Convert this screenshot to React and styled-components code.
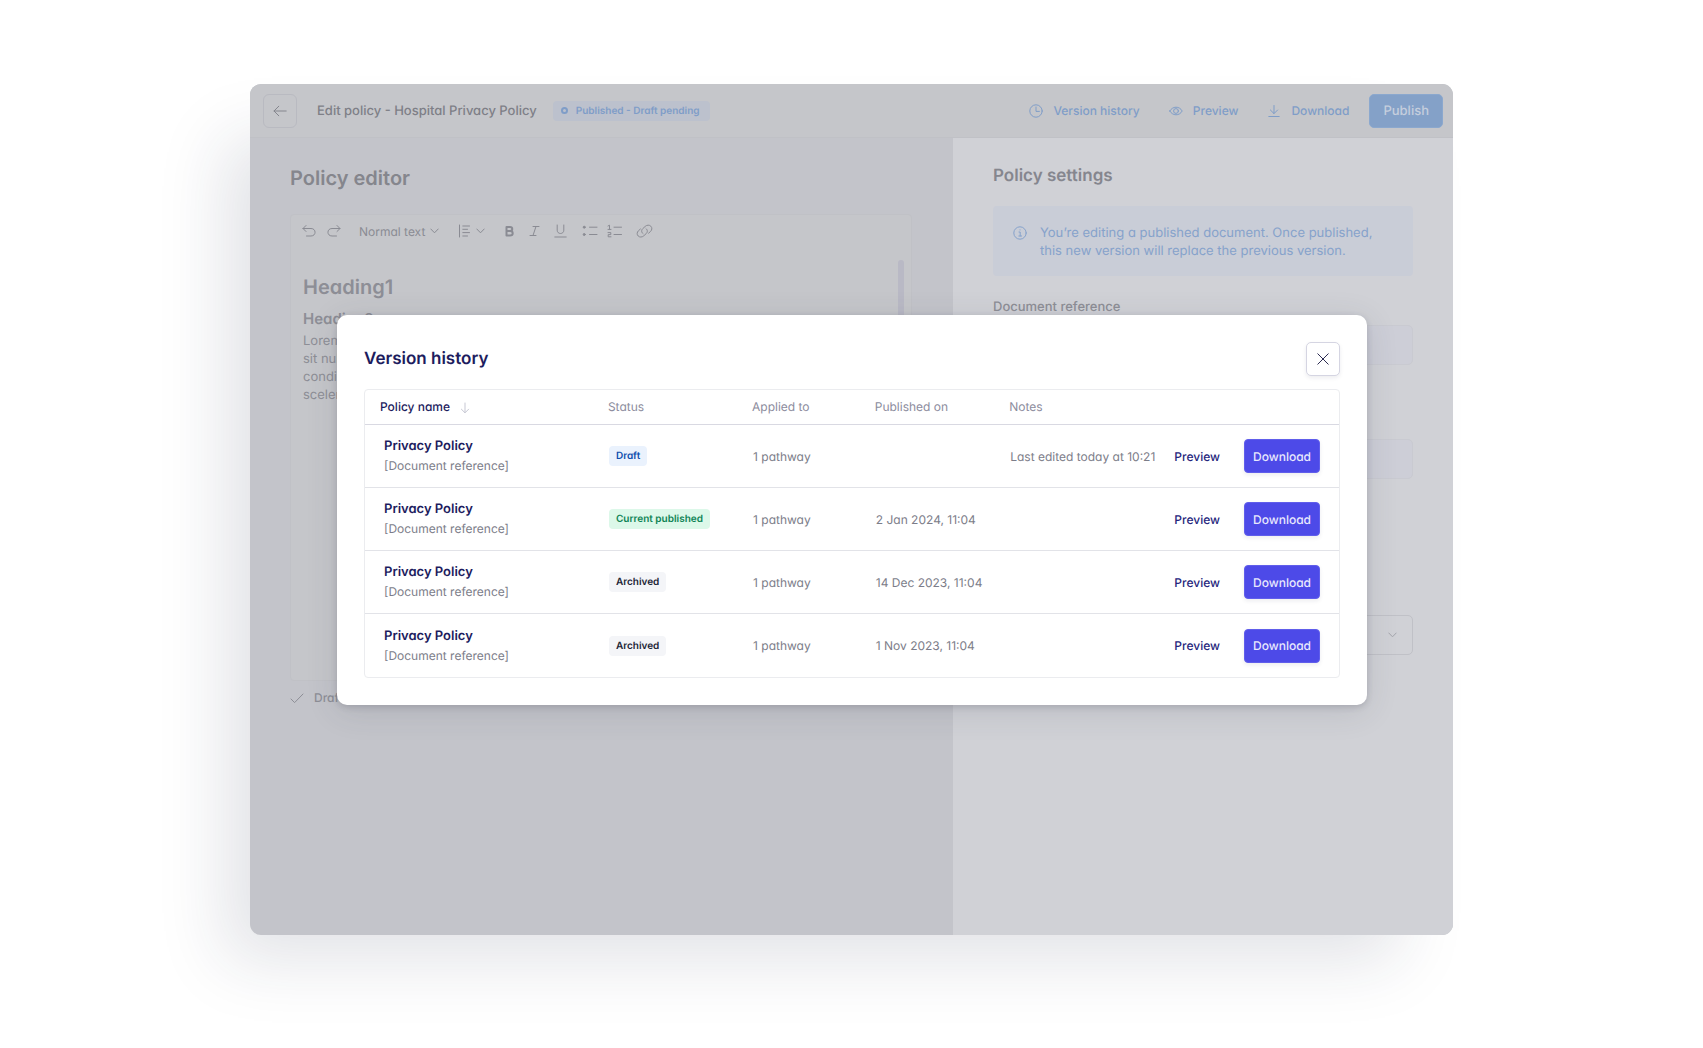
import React from "react";
import styled, { createGlobalStyle } from "styled-components";

const GlobalStyle = createGlobalStyle`
   * {
      box-sizing: border-box;
   }
   body {
      margin: 0;
      background: #fff;
   }
   body,
   button,
   input,
   select {
      font-family: Inter, "Liberation Sans", sans-serif;
      font-feature-settings: "cv11";
      text-rendering: geometricPrecision;
   }
   h1,
   h2,
   h3,
   p {
      margin: 0;
   }
   button {
      cursor: pointer;
   }
`;

const Page = styled.div`
   display: flex;
   min-height: 100vh;
   padding: 84px 250px 113px;
`;

const Frame = styled.div`
   position: relative;
   display: flex;
   flex: 1;
   flex-direction: column;
   border-radius: 11px;
   background: #c3c4ca;
   box-shadow: -40px 40px 64px -15px rgba(30, 42, 66, 0.13);
`;

const TopBar = styled.header`
   display: flex;
   align-items: center;
   height: 54px;
   padding: 0 10px 0 13px;
   border-bottom: 1px solid #c0c1c6;
   border-radius: 11px 11px 0 0;
   background: #c5c6ca;
`;

const BackButton = styled.button`
   display: flex;
   align-items: center;
   justify-content: center;
   width: 34px;
   height: 34px;
   padding: 0;
   border: 1px solid #b9bac1;
   border-radius: 6px;
   background: transparent;
   color: #85868e;
`;

const DocTitle = styled.h1`
   margin-left: 20px;
   color: #7e7f87;
   font-size: 13px;
   font-weight: 500;
   line-height: 20px;
`;

const PendingBadge = styled.span`
   display: flex;
   align-items: center;
   gap: 8px;
   height: 20px;
   margin-left: 16px;
   padding: 0 10px 0 8px;
   border-radius: 4px;
   background: #bcc1cd;
   color: #7f9dc8;
   font-size: 10px;
   font-weight: 600;
`;

const Ring = styled.span`
   width: 7px;
   height: 7px;
   border: 2px solid #7f9dc8;
   border-radius: 50%;
`;

const TopActions = styled.div`
   display: flex;
   align-items: center;
   gap: 29px;
   margin-left: auto;
`;

const LinkButton = styled.button`
   display: flex;
   align-items: center;
   gap: 10px;
   padding: 0;
   border: none;
   background: transparent;
   color: #7f9dc8;
   font-size: 12px;
   font-weight: 500;
`;

const PublishButton = styled.button`
   height: 34px;
   margin-left: -9px;
   padding: 0 13px;
   border: 1px solid #8ba8ce;
   border-radius: 5px;
   background: #84a1c8;
   color: #c5cedd;
   font-size: 13px;
   font-weight: 500;
`;

const Body = styled.div`
   display: flex;
   flex: 1;
`;

const Editor = styled.main`
   flex: 1;
   padding: 26px 41px 26px 40px;
`;

const EditorTitle = styled.h2`
   color: #85868d;
   font-size: 20px;
   font-weight: 600;
   line-height: 28px;
`;

const EditorCard = styled.div`
   height: 467px;
   margin-top: 22px;
   border: 1px solid #c0c1c6;
   border-radius: 4px;
   background: #c5c6ca;
`;

const Toolbar = styled.div`
   display: flex;
   align-items: center;
   height: 32px;
   padding: 0 11px;
`;

const Tool = styled.button`
   display: flex;
   align-items: center;
   gap: 5px;
   margin-right: ${(props) => props.$gap || 9}px;
   padding: 0;
   border: none;
   background: transparent;
   color: #8a8b93;
   font-size: 12px;
   font-weight: 400;
`;

const Content = styled.div`
   display: flex;
   justify-content: space-between;
   padding: 13px 7px 0 12px;
   color: #8d8e96;
`;

const DocText = styled.div`
   white-space: nowrap;

   h2 {
      padding-top: 13px;
      font-size: 20px;
      font-weight: 600;
      line-height: 28px;
   }
   h3 {
      padding: 9px 0 4px;
      font-size: 15px;
      font-weight: 600;
      line-height: 18px;
   }
   p {
      font-size: 13px;
      line-height: 18px;
   }
`;

const ScrollThumb = styled.div`
   width: 6px;
   height: 140px;
   border-radius: 3px;
   background: #b9b9c5;
`;

const SavedNote = styled.p`
   display: flex;
   align-items: center;
   gap: 10px;
   margin-top: 9px;
   color: #8d8e96;
   font-size: 12px;
   font-weight: 500;
`;

const Settings = styled.aside`
   width: 500px;
   padding: 26px 40px;
   border-radius: 0 0 11px 0;
   background: #d0d1d6;
`;

const SettingsTitle = styled.h2`
   color: #85868e;
   font-size: 17px;
   font-weight: 600;
   line-height: 24px;
`;

const InfoBox = styled.div`
   display: flex;
   gap: 13px;
   margin-top: 18px;
   padding: 18px 20px 16px;
   border-radius: 4px;
   background: #c9cdd7;
   color: #86a2cb;
   font-size: 13px;
   line-height: 18px;

   svg {
      margin-top: 2px;
      flex: none;
   }
`;

const FieldLabel = styled.label`
   display: block;
   margin: 21px 0 8px;
   color: #8d8e96;
   font-size: 13px;
   font-weight: 500;
   line-height: 20px;
`;

const Field = styled.input`
   display: block;
   width: 100%;
   height: 40px;
   margin-bottom: 74px;
   border: 1px solid #c9cad1;
   border-radius: 5px;
   background: #cdced7;
`;

const SelectWrap = styled.div`
   display: flex;
   align-items: center;
   justify-content: flex-end;
   height: 40px;
   margin-top: 136px;
   padding-right: 15px;
   border: 1px solid #c0c1c7;
   border-radius: 5px;
   color: #a4a5ac;

   select {
      flex: 1;
      height: 100%;
      border: none;
      background: transparent;
      appearance: none;
   }
`;

const Overlay = styled.div`
   position: absolute;
   inset: 0;
   display: flex;
   align-items: center;
   padding: 0 86px 0 87px;
   border-radius: 11px;
`;

const Modal = styled.section`
   flex: 1;
   padding: 27px;
   border-radius: 10px;
   background: #fff;
   box-shadow: 0 2px 6px rgba(60, 62, 75, 0.2), 0 6px 32px rgba(60, 62, 75, 0.14);
`;

const ModalHead = styled.div`
   display: flex;
   align-items: center;
   justify-content: space-between;
   margin-bottom: 13px;
`;

const ModalTitle = styled.h2`
   color: #1d1c5e;
   font-size: 17px;
   font-weight: 600;
`;

const CloseButton = styled.button`
   display: flex;
   align-items: center;
   justify-content: center;
   width: 34px;
   height: 34px;
   padding: 0;
   border: 1px solid #d5d5e2;
   border-radius: 5px;
   background: #fff;
   box-shadow: 0 2px 4px rgba(30, 30, 60, 0.08);
   color: #2b2b50;
`;

const TableBox = styled.div`
   border: 1px solid #ebecef;
   border-radius: 4px;
`;

const Table = styled.table`
   width: 100%;
   border-spacing: 0;
   table-layout: fixed;
   color: #7c7d89;
   font-size: 12px;
   white-space: nowrap;
`;

const Th = styled.th`
   width: ${(props) => props.$width};
   height: 35px;
   padding: 0 15px;
   border-bottom: 1px solid #d9d9e2;
   color: ${(props) => (props.$sorted ? "#1d1c5e" : "#8c8c9d")};
   font-weight: ${(props) => (props.$sorted ? 500 : 400)};
   text-align: left;

   svg {
      margin-left: 10px;
      vertical-align: middle;
      color: #c6c7d3;
   }
`;

const Td = styled.td`
   height: 63px;
   padding: 1px ${(props) => props.$pad || 16}px 0;
   border-bottom: 1px solid #e2e3e8;

   tr:last-child & {
      border-bottom: none;
   }
`;

const PolicyName = styled.div`
   color: #1d1c5e;
   font-size: 13px;
   font-weight: 600;
   line-height: 20px;
`;

const PolicyRef = styled.div`
   line-height: 20px;
`;

const tones = {
   blue: "background: #eaf2fd; color: #0e4fae;",
   green: "background: #dcf8e9; color: #0f8455;",
   grey: "background: #f4f5f8; color: #1c2536;",
};

const Status = styled.span`
   display: inline-block;
   padding: 0 7px;
   border-radius: 4px;
   font-size: 10px;
   font-weight: 600;
   line-height: 20px;
   ${(props) => tones[props.$tone]}
`;

const RowActions = styled.div`
   display: flex;
   align-items: center;
   justify-content: flex-end;
   gap: 24px;
`;

const PreviewButton = styled.button`
   padding: 0;
   border: none;
   background: transparent;
   color: #25257c;
   font-size: 12px;
   font-weight: 500;
`;

const DownloadButton = styled.button`
   height: 34px;
   padding: 0 8px;
   border: 1px solid #605eeb;
   border-radius: 4px;
   background: #4d4ae8;
   box-shadow: 0 2px 4px rgba(30, 30, 60, 0.08);
   color: #e8e8fd;
   font-size: 12px;
   font-weight: 500;
`;

const Svg = ({ w = 14, h = 14, sw = 1, children }) => (
   <svg
      width={w}
      height={h}
      viewBox={`0 0 ${w} ${h}`}
      fill="none"
      stroke="currentColor"
      strokeWidth={sw}
      strokeLinecap="round"
      strokeLinejoin="round"
      aria-hidden="true"
   >
      {children}
   </svg>
);

const Chevron = () => (
   <Svg w={9} h={6}>
      <path d="M0.8 1 L4.5 4.8 L8.2 1" />
   </Svg>
);

const rows = [
   { status: "Draft", tone: "blue", published: "", notes: "Last edited today at 10:21" },
   { status: "Current published", tone: "green", published: "2 Jan 2024, 11:04", notes: "" },
   { status: "Archived", tone: "grey", published: "14 Dec 2023, 11:04", notes: "" },
   { status: "Archived", tone: "grey", published: "1 Nov 2023, 11:04", notes: "" },
];

const Header = () => (
   <TopBar>
      <BackButton aria-label="Back">
         <Svg>
            <path d="M13.2 7 H1 M5.8 2.2 L1 7 L5.8 11.8" />
         </Svg>
      </BackButton>
      <DocTitle>Edit policy - Hospital Privacy Policy</DocTitle>
      <PendingBadge>
         <Ring />
         Published - Draft pending
      </PendingBadge>
      <TopActions>
         <LinkButton>
            <Svg>
               <circle cx="7" cy="7" r="6.2" />
               <path d="M7 3 V7.4 H10.4" />
            </Svg>
            Version history
         </LinkButton>
         <LinkButton>
            <Svg>
               <path d="M0.8 7 C3.6 1.9 10.4 1.9 13.2 7 C10.4 12.1 3.6 12.1 0.8 7 Z" />
               <circle cx="7" cy="7" r="2.4" />
            </Svg>
            Preview
         </LinkButton>
         <LinkButton>
            <Svg>
               <path d="M7 1.5 V9.4 M3.4 6 L7 9.6 L10.6 6 M1.8 12.5 H12.2" />
            </Svg>
            Download
         </LinkButton>
         <PublishButton>Publish</PublishButton>
      </TopActions>
   </TopBar>
);

const EditorToolbar = () => (
   <Toolbar>
      <Tool aria-label="Undo" $gap={11}>
         <Svg>
            <path d="M4 1.5 L1 4.5 L4 7.5 M1 4.5 H9 C14.4 4.5 14.4 12 9 12 H4.5" />
         </Svg>
      </Tool>
      <Tool aria-label="Redo" $gap={18}>
         <Svg>
            <path d="M10 1.5 L13 4.5 L10 7.5 M13 4.5 H5 C-0.4 4.5 -0.4 12 5 12 H9.5" />
         </Svg>
      </Tool>
      <Tool $gap={19}>
         Normal text
         <Chevron />
      </Tool>
      <Tool aria-label="Alignment" $gap={19}>
         <Svg w={13}>
            <path d="M1.5 1 V13 M4.8 2 H11.5 M4.8 5.3 H9.5 M4.8 8.6 H11.5 M4.8 12 H9.5" />
         </Svg>
         <Chevron />
      </Tool>
      <Tool aria-label="Bold" $gap={14}>
         <Svg w={11} sw={2}>
            <path d="M2.5 3 H6 C9 3 9 7 6 7 H2.5 M6 7 C9.6 7 9.6 11.5 6 11.5 H2.5 V3" />
         </Svg>
      </Tool>
      <Tool aria-label="Italic" $gap={14}>
         <Svg w={11}>
            <path d="M4 2.5 H10 M1 11.5 H7 M7 2.5 L4 11.5" />
         </Svg>
      </Tool>
      <Tool aria-label="Underline" $gap={15}>
         <Svg w={13}>
            <path d="M3.2 1 V6.2 C3.2 10.6 9.8 10.6 9.8 6.2 V1 M0.8 13 H12.2" />
         </Svg>
      </Tool>
      <Tool aria-label="Bulleted list" $gap={9}>
         <Svg w={16}>
            <path d="M7.5 3.2 H15 M7.5 10.5 H15" />
            <circle cx="2.2" cy="3.2" r="1" fill="currentColor" />
            <circle cx="2.2" cy="10.5" r="1" fill="currentColor" />
         </Svg>
      </Tool>
      <Tool aria-label="Numbered list" $gap={13}>
         <Svg w={16}>
            <path d="M7 3.2 H14.5 M7 10.5 H14.5" />
            <path d="M1 2 L2.5 1.2 V5.4 M1 5.4 H4 M1 8.6 H3.8 V10.6 H1.2 V12.8 H4" />
         </Svg>
      </Tool>
      <Tool aria-label="Insert link">
         <Svg w={17}>
            <path d="M7 9.6 C5 8.2 5.4 6 6.8 4.6 L9.2 2.4 C11 0.8 13.4 0.8 14.8 2.2 C16.4 3.8 16 6 14.6 7.4 L12.6 9.2" />
            <path d="M10 4.6 C12 6 11.6 8.2 10.2 9.6 L7.8 11.8 C6 13.4 3.6 13.4 2.2 12 C0.6 10.4 1 8.2 2.4 6.8 L4.4 5" />
         </Svg>
      </Tool>
   </Toolbar>
);

const VersionHistory = () => (
   <Modal role="dialog" aria-labelledby="history-title">
      <ModalHead>
         <ModalTitle id="history-title">Version history</ModalTitle>
         <CloseButton aria-label="Close">
            <Svg w={12} h={12}>
               <path d="M0.8 0.8 L11.2 11.2 M11.2 0.8 L0.8 11.2" />
            </Svg>
         </CloseButton>
      </ModalHead>
      <TableBox>
         <Table>
            <thead>
               <tr>
                  <Th $width="23.4%" $sorted>
                     Policy name
                     <Svg w={10} h={12}>
                        <path d="M5 1 V10.6 M1.4 7.2 L5 10.8 L8.6 7.2" />
                     </Svg>
                  </Th>
                  <Th $width="14.8%">Status</Th>
                  <Th $width="12.6%">Applied to</Th>
                  <Th $width="13.8%">Published on</Th>
                  <Th $width="16%">Notes</Th>
                  <Th aria-label="Actions" />
               </tr>
            </thead>
            <tbody>
               {rows.map((row, i) => (
                  <tr key={i}>
                     <Td $pad={19}>
                        <PolicyName>Privacy Policy</PolicyName>
                        <PolicyRef>[Document reference]</PolicyRef>
                     </Td>
                     <Td>
                        <Status $tone={row.tone}>{row.status}</Status>
                     </Td>
                     <Td>1 pathway</Td>
                     <Td>{row.published}</Td>
                     <Td>{row.notes}</Td>
                     <Td $pad={19}>
                        <RowActions>
                           <PreviewButton>Preview</PreviewButton>
                           <DownloadButton>Download</DownloadButton>
                        </RowActions>
                     </Td>
                  </tr>
               ))}
            </tbody>
         </Table>
      </TableBox>
   </Modal>
);

const App = () => (
   <Page>
      <GlobalStyle />
      <Frame>
         <Header />
         <Body>
            <Editor>
               <EditorTitle>Policy editor</EditorTitle>
               <EditorCard>
                  <EditorToolbar />
                  <Content>
                     <DocText>
                        <h2>Heading1</h2>
                        <h3>Heading2</h3>
                        <p>
                           Lorem ipsum
                           <br />
                           sit nulla
                           <br />
                           condimentum
                           <br />
                           scelerisque
                        </p>
                     </DocText>
                     <ScrollThumb />
                  </Content>
               </EditorCard>
               <SavedNote>
                  <Svg>
                     <path d="M1 8 L4.6 11.6 L13 3" />
                  </Svg>
                  Draft saved
               </SavedNote>
            </Editor>
            <Settings>
               <SettingsTitle>Policy settings</SettingsTitle>
               <InfoBox>
                  <Svg>
                     <circle cx="7" cy="7" r="6.2" />
                     <path d="M6 6 H7.2 V10 M5.8 10 H8.6 M7 3.8 V4" />
                  </Svg>
                  <p>
                     You’re editing a published document. Once published, this new version will replace the
                     previous version.
                  </p>
               </InfoBox>
               <FieldLabel htmlFor="doc-ref">Document reference</FieldLabel>
               <Field id="doc-ref" />
               <Field aria-label="Policy name" />
               <SelectWrap>
                  <select aria-label="Status" />
                  <Chevron />
               </SelectWrap>
            </Settings>
         </Body>
         <Overlay>
            <VersionHistory />
         </Overlay>
      </Frame>
   </Page>
);

export default App;
